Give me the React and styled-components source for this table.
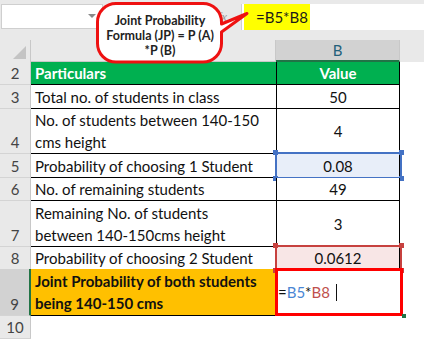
import React from "react";
import styled, { createGlobalStyle } from "styled-components";

const Global = createGlobalStyle`
  html, body { margin: 0; padding: 0; background: #ffffff; }
  body { font-family: Lato, "Liberation Sans", sans-serif; }
`;

const Sheet = styled.div`
  position: relative;
  width: 424px;
  height: 339px;
  overflow: hidden;
  background: #ffffff;
  font-family: Lato, "Liberation Sans", sans-serif;
`;

const FormulaBar = styled.div`
  display: flex;
  align-items: flex-start;
  height: 40px;
  padding-top: 4px;
  box-sizing: border-box;
  background: #e9e9e9;
`;

const NameBox = styled.div`
  position: relative;
  margin-left: 1px;
  width: 102px;
  height: 25px;
  box-sizing: border-box;
  background: #ffffff;
  border: 1px solid #cfcfcf;
`;

const DropArrow = styled.span`
  position: absolute;
  right: 6px;
  top: 9px;
  width: 0;
  height: 0;
  border-left: 4px solid transparent;
  border-right: 4px solid transparent;
  border-top: 4px solid #8a8a8a;
`;

const FxZone = styled.div`
  display: flex;
  justify-content: flex-end;
  align-items: center;
  width: 138px;
  height: 25px;
  padding-right: 14px;
  box-sizing: border-box;
  color: #9a9a9a;
  font-family: "Liberation Serif", serif;
  font-style: italic;
  font-size: 13px;
`;

const FormulaInput = styled.div`
  flex: 1;
  display: flex;
  align-items: center;
  height: 26px;
  box-sizing: border-box;
  background: #ffffff;
  border-left: 1px solid #cfcfcf;
  padding-left: 2px;
`;

const Highlight = styled.span`
  display: flex;
  align-items: center;
  width: 66px;
  height: 26px;
  box-sizing: border-box;
  padding-left: 12px;
  background: #ffff00;
  color: #1a1a1a;
  font-size: 15px;
`;

const HeaderRow = styled.div`
  display: grid;
  grid-template-columns: 31px 245px 124px 1fr;
  height: 22px;
  background: #e9e9e9;
`;

const Corner = styled.div`
  position: relative;
  border-right: 1px solid #c8c8c8;
  box-sizing: border-box;
`;

const CornerTri = styled.span`
  position: absolute;
  right: 4px;
  bottom: 3px;
  width: 0;
  height: 0;
  border-left: 13px solid transparent;
  border-bottom: 13px solid #c4c4c4;
`;

const ColHead = styled.div`
  display: flex;
  align-items: center;
  justify-content: center;
  box-sizing: border-box;
  font-size: 15px;
  background: ${(p) => (p.$active ? "#d2d2d2" : "#e9e9e9")};
  color: ${(p) => (p.$active ? "#22607a" : "#444")};
  border-right: 1px solid #c8c8c8;
  border-bottom: ${(p) => (p.$active ? "2px solid #217346" : "1px solid #c8c8c8")};
`;

const Filler = styled.div`
  background: #e9e9e9;
`;

const Row = styled.div`
  display: grid;
  grid-template-columns: 31px 245px 124px 1fr;
  height: ${(p) => p.$h}px;
`;

const RowNum = styled.div`
  display: flex;
  align-items: flex-end;
  justify-content: center;
  padding-bottom: 1px;
  box-sizing: border-box;
  font-size: 15px;
  line-height: 20px;
  color: #444;
  background: ${(p) => (p.$active ? "#d2d2d2" : "#e9e9e9")};
  border-bottom: 1px solid #d4d4d4;
  border-right: ${(p) => (p.$active ? "2px solid #217346" : "1px solid #c8c8c8")};
`;

const CellA = styled.div`
  display: flex;
  align-items: center;
  padding-left: 4px;
  box-sizing: border-box;
  font-size: 15px;
  line-height: 22px;
  color: ${(p) => (p.$kind === "header" ? "#ffffff" : "#111")};
  font-weight: ${(p) => (p.$kind ? 700 : 400)};
  background: ${(p) =>
    p.$kind === "header" ? "#00b050" : p.$kind === "result" ? "#ffc000" : "#ffffff"};
  border-bottom: ${(p) => (p.$blank ? "none" : "1px solid #000")};
  white-space: nowrap;
`;

const CellB = styled.div`
  position: relative;
  display: flex;
  align-items: center;
  justify-content: center;
  box-sizing: border-box;
  font-size: 15px;
  color: ${(p) => (p.$kind === "header" ? "#ffffff" : "#111")};
  font-weight: ${(p) => (p.$kind === "header" ? 700 : 400)};
  background: ${(p) =>
    p.$kind === "header"
      ? "#00b050"
      : p.$sel === "blue"
      ? "#e8eef9"
      : p.$sel === "red"
      ? "#f8e6e6"
      : "#ffffff"};
  border-left: ${(p) => (p.$blank ? "none" : "1px solid #000")};
  border-right: ${(p) => (p.$blank ? "none" : "1px solid #000")};
  border-bottom: ${(p) => (p.$blank ? "none" : "1px solid #000")};
`;

const SelBox = styled.div`
  position: absolute;
  left: -2px;
  right: -3px;
  top: -2px;
  bottom: -2px;
  border: 2px solid ${(p) => p.$color};
  pointer-events: none;
`;

const Handle = styled.span`
  position: absolute;
  width: 5px;
  height: 5px;
  background: ${(p) => p.$color};
  ${(p) => (p.$top ? "top: -4px;" : "bottom: -4px;")}
  ${(p) => (p.$left ? "left: -4px;" : "right: -4px;")}
`;

const EditBox = styled.div`
  position: absolute;
  left: -2px;
  right: -4px;
  top: -1px;
  bottom: -1px;
  border: 3px solid #ff0000;
  display: flex;
  align-items: center;
  font-size: 15px;
  color: #111;
  background: #ffffff;
`;

const Ref = styled.span`
  color: ${(p) => p.$c};
`;

const Caret = styled.span`
  display: inline-block;
  width: 1px;
  height: 17px;
  margin-left: 6px;
  background: #111;
`;

const FillHandle = styled.span`
  position: absolute;
  right: -6px;
  bottom: -5px;
  width: 4px;
  height: 4px;
  background: #217346;
`;

const Callout = styled.div`
  position: absolute;
  left: 96px;
  top: 2px;
  width: 156px;
  height: 64px;
`;

const CalloutText = styled.div`
  position: absolute;
  left: 1px;
  top: 11px;
  width: 126px;
  text-align: center;
  font-family: Lato, "Liberation Sans", sans-serif;
  font-weight: 700;
  font-size: 12.5px;
  line-height: 15px;
  color: #222;
`;

const rows = [
  { n: 2, h: 23, a: ["Particulars"], b: "Value", kind: "header" },
  { n: 3, h: 24, a: ["Total no. of students in class"], b: "50" },
  { n: 4, h: 45, a: ["No. of students between 140-150", "cms height"], b: "4" },
  { n: 5, h: 24, a: ["Probability of choosing 1 Student"], b: "0.08", sel: "blue" },
  { n: 6, h: 23, a: ["No. of remaining students"], b: "49" },
  { n: 7, h: 46, a: ["Remaining No. of students", "between 140-150cms height"], b: "3" },
  { n: 8, h: 22, a: ["Probability of choosing 2 Student"], b: "0.0612", sel: "red" },
  { n: 9, h: 47, a: ["Joint Probability of both students", "being 140-150 cms"], kind: "result" },
  { n: 10, h: 23, blank: true },
];

const selColor = { blue: "#4472c4", red: "#c7413f" };

function Lines({ lines }) {
  return (
    <div>
      {lines.map((l, i) => (
        <div key={i}>{l}</div>
      ))}
    </div>
  );
}

export default function App() {
  return (
    <Sheet>
      <Global />
      <FormulaBar>
        <NameBox>
          <DropArrow />
        </NameBox>
        <FxZone>fx</FxZone>
        <FormulaInput>
          <Highlight>=B5*B8</Highlight>
        </FormulaInput>
      </FormulaBar>
      <HeaderRow>
        <Corner>
          <CornerTri />
        </Corner>
        <ColHead />
        <ColHead $active>B</ColHead>
        <Filler />
      </HeaderRow>
      {rows.map((r) => (
        <Row key={r.n} $h={r.h}>
          <RowNum $active={r.kind === "result"}>{r.n}</RowNum>
          <CellA $kind={r.kind} $blank={r.blank}>
            {r.a && <Lines lines={r.a} />}
          </CellA>
          <CellB $kind={r.kind} $sel={r.sel} $blank={r.blank}>
            {r.b}
            {r.sel && (
              <SelBox $color={selColor[r.sel]}>
                <Handle $color={selColor[r.sel]} $top $left />
                <Handle $color={selColor[r.sel]} $top />
                <Handle $color={selColor[r.sel]} $left />
                <Handle $color={selColor[r.sel]} />
              </SelBox>
            )}
            {r.kind === "result" && (
              <EditBox>
                =<Ref $c="#4a86d4">B5</Ref>*<Ref $c="#c0504d">B8</Ref>
                <Caret />
                <FillHandle />
              </EditBox>
            )}
          </CellB>
          <div />
        </Row>
      ))}
      <Callout>
        <svg width="156" height="64" viewBox="0 0 156 64">
          <path
            d="M20 1.5 H107 A18.5 18.5 0 0 1 125.5 20 V22 L151 11.5 L125.5 30 V41.5 A18.5 18.5 0 0 1 107 60 H20 A18.5 18.5 0 0 1 1.5 41.5 V20 A18.5 18.5 0 0 1 20 1.5 Z"
            fill="#ffffff"
            stroke="#ee1111"
            strokeWidth="3"
            strokeLinejoin="round"
          />
        </svg>
        <CalloutText>
          Joint Probability
          <br />
          Formula (JP) = P (A)
          <br />
          *P (B)
        </CalloutText>
      </Callout>
    </Sheet>
  );
}
